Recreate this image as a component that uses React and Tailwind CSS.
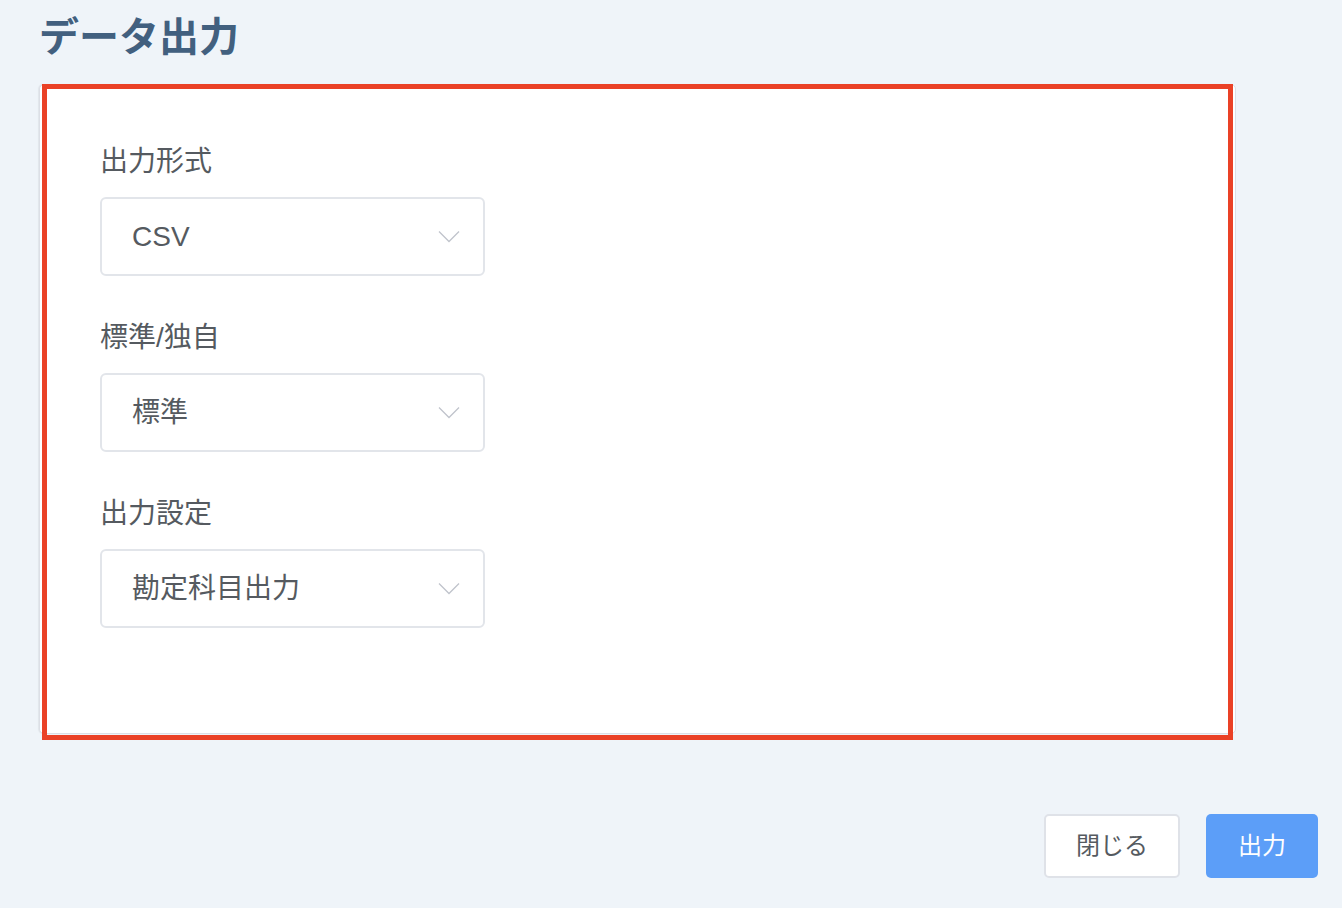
const fields = [
  { label: "出力形式", value: "CSV" },
  { label: "標準/独自", value: "標準" },
  { label: "出力設定", value: "勘定科目出力" },
];

function Chevron() {
  return (
    <svg width="22" height="13" viewBox="0 0 22 13" fill="none">
      <path d="M1 1.5 L11 11.5 L21 1.5" stroke="#c0c4cc" strokeWidth="1.3" />
    </svg>
  );
}

function SelectBox({ value }) {
  return (
    <div className="w-[385px] h-[79px] bg-white border-2 border-[#e2e5ea] rounded-[6px] flex items-center justify-between pl-[30px] pr-[23px]">
      <span className="text-[28px] text-[#555a60]">{value}</span>
      <Chevron />
    </div>
  );
}

export default function App() {
  return (
    <div
      className="min-h-screen bg-[#eff4f9] pl-[39px] pr-[24px] pt-[10px]"
      style={{ fontFamily: '"Liberation Sans", "Noto Sans CJK JP", sans-serif' }}
    >
      <h1 className="text-[40px] leading-[55px] font-bold text-[#42607f] mb-[19px]">
        データ出力
      </h1>

      <div className="relative w-[1197px] h-[650px] bg-white border border-[#dcdfe6] rounded-[5px] shadow-[-1px_0_1px_rgba(0,0,0,0.06)] pt-[56px] pl-[60px]">
        <div className="flex flex-col gap-[41px]">
          {fields.map((f) => (
            <div key={f.label}>
              <div className="text-[28px] leading-[42px] text-[#555a60] mb-[14px]">
                {f.label}
              </div>
              <SelectBox value={f.value} />
            </div>
          ))}
        </div>

        <div className="absolute left-[2px] top-[-1px] w-[1191px] h-[656px] border-[5px] border-[#ea4126] pointer-events-none" />
      </div>

      <div className="flex justify-end gap-[26px] mt-[80px]">
        <button className="w-[136px] h-[64px] bg-white border-2 border-[#dfe2e8] rounded-[5px] text-[24px] text-[#555a60]">
          閉じる
        </button>
        <button className="w-[112px] h-[64px] bg-[#5c9ef8] rounded-[5px] text-[24px] text-white">
          出力
        </button>
      </div>
    </div>
  );
}
